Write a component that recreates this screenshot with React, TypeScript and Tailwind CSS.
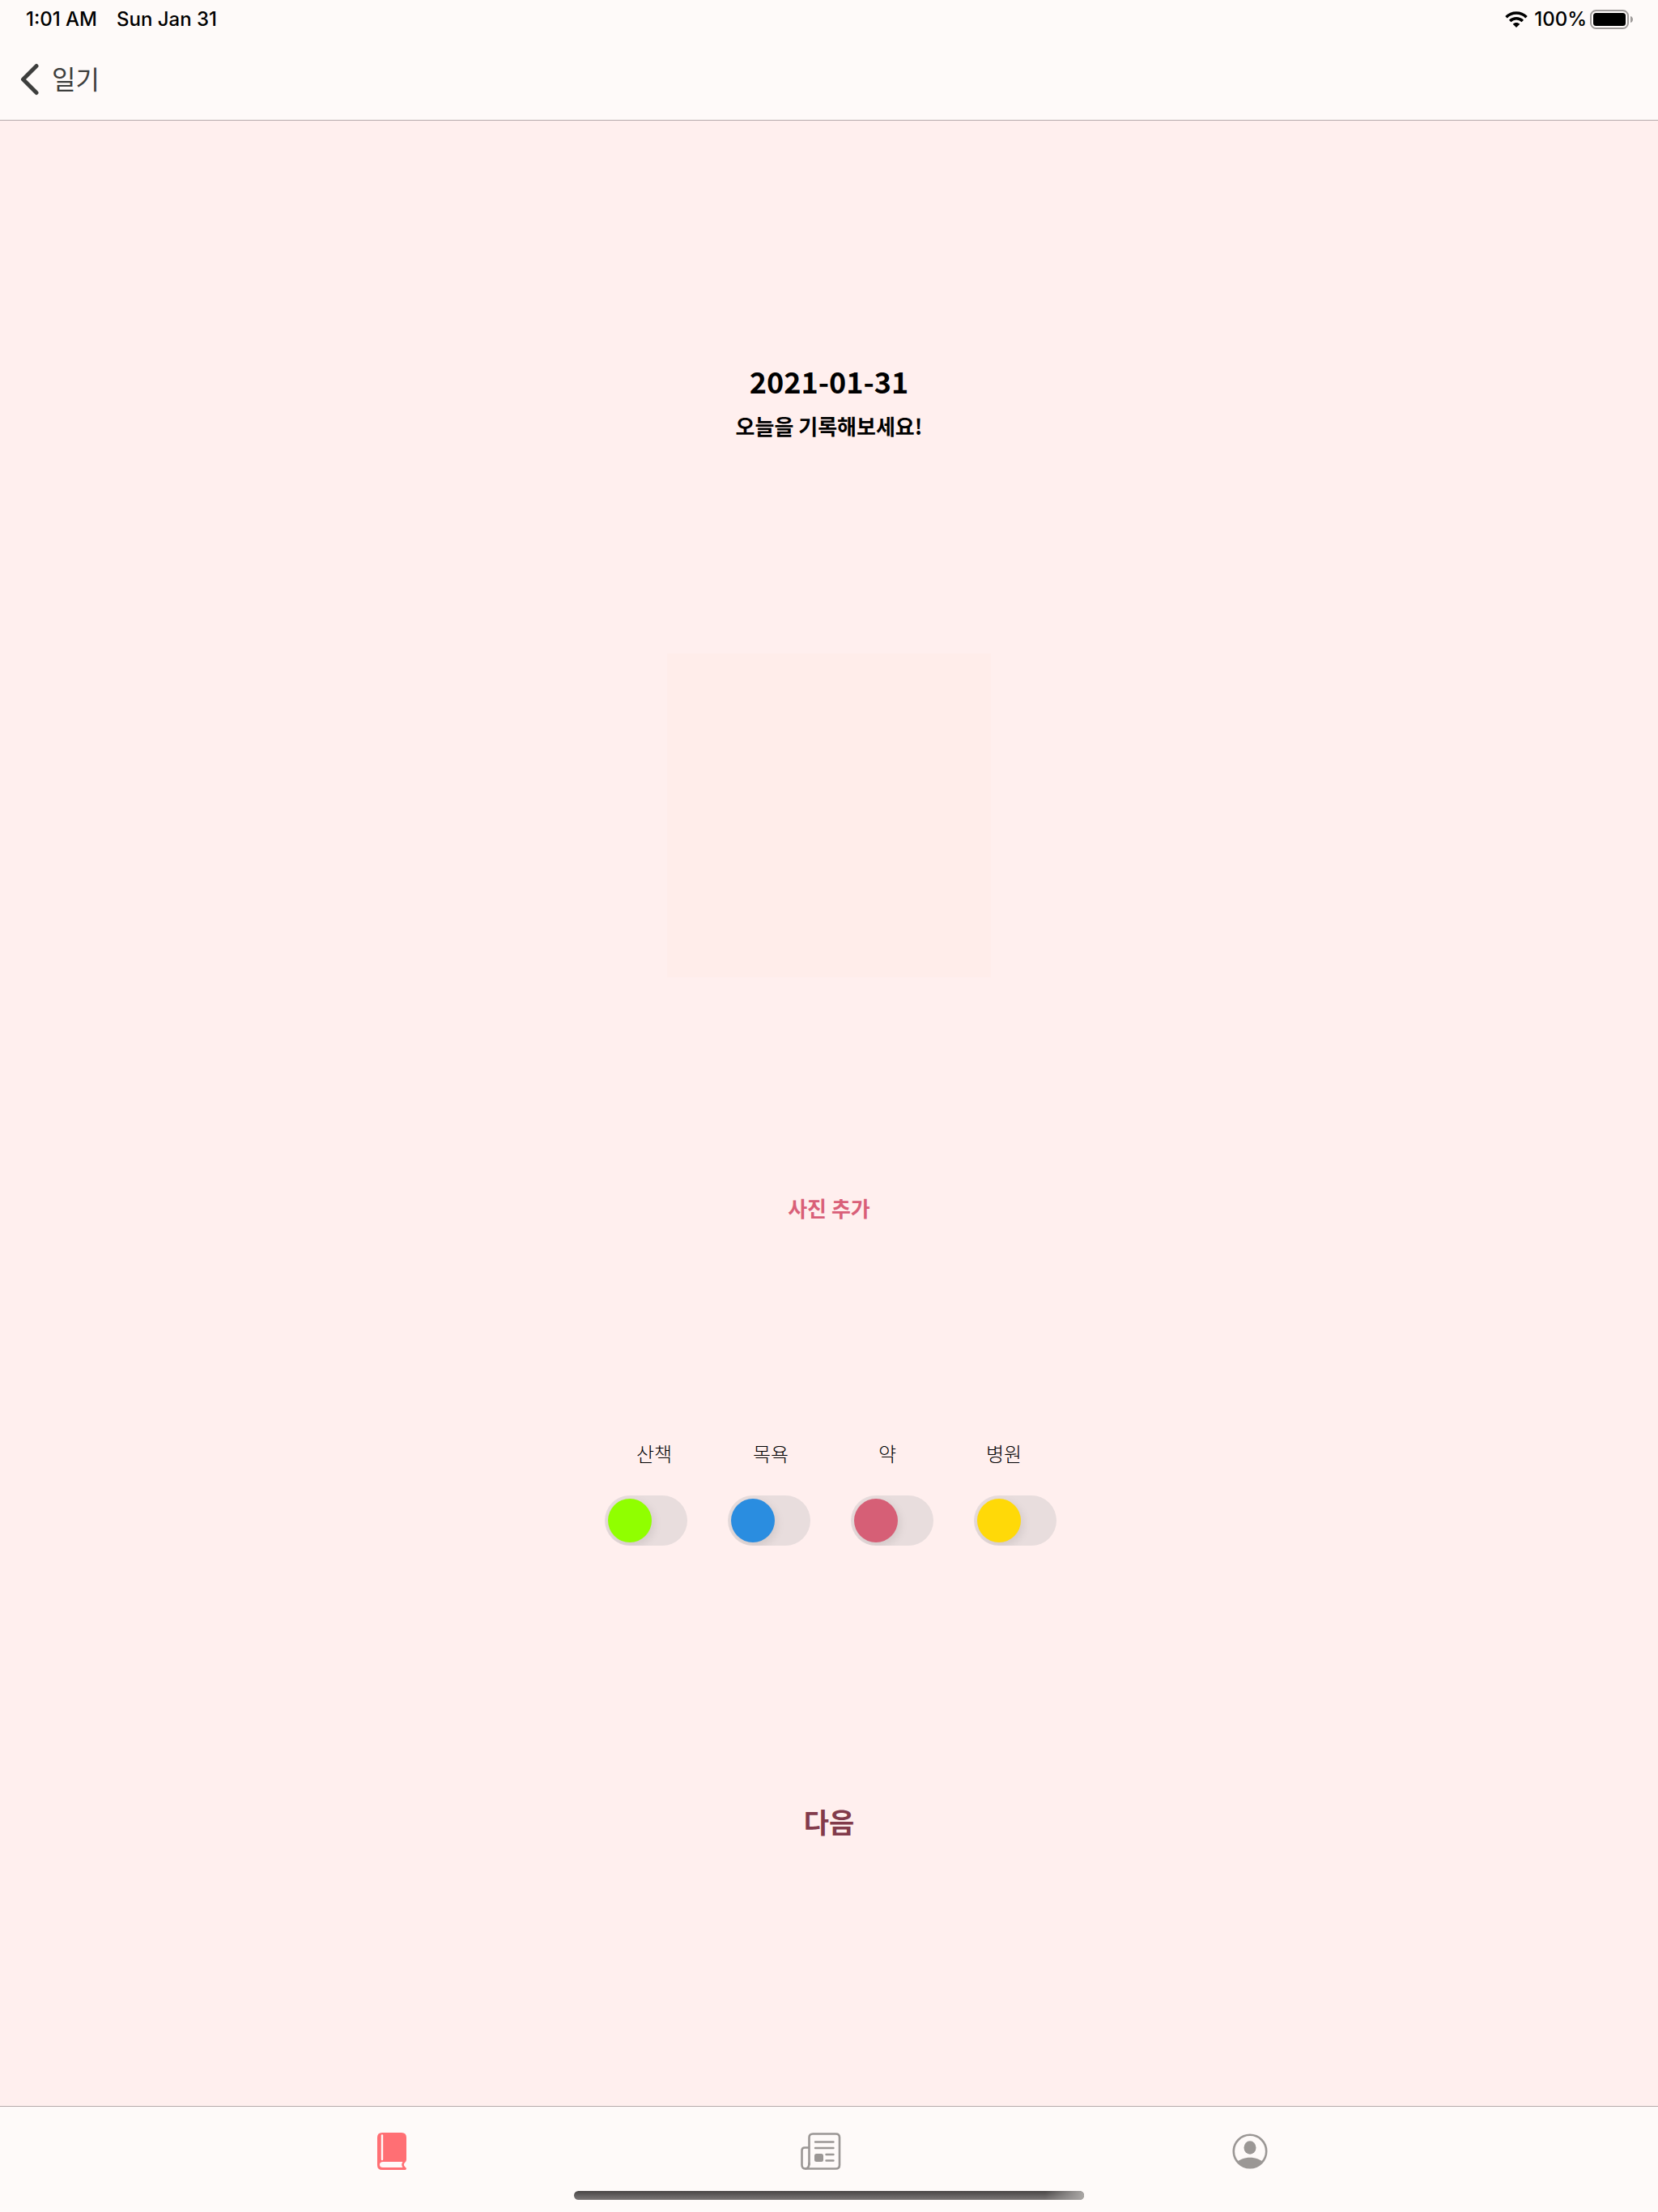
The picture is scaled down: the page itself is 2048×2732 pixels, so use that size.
import React from "react";

const activities = [
  { id: "walk", label: "산책", knob: "before:bg-[#90ff00]" },
  { id: "bath", label: "목욕", knob: "before:bg-[#2a8de0]" },
  { id: "medicine", label: "약", knob: "before:bg-[#d65f76]" },
  { id: "hospital", label: "병원", knob: "before:bg-[#ffd908]" },
];

function WifiIcon() {
  return (
    <svg width="28" height="20" viewBox="0 0 28 20" fill="none" stroke="#000" strokeWidth="3.6" aria-hidden="true">
      <path d="M1.5 7.2C8.4 .3 19.600 .3 26.500 7.200" />
      <path d="M6.200 11.900C10.500 7.600 17.500 7.600 21.800 11.900" />
      <path d="M14 20L9.700 15.700C12.100 13.500 15.900 13.500 18.300 15.700Z" fill="#000" stroke="none" />
    </svg>
  );
}

function BatteryIcon() {
  return (
    <svg width="54" height="24" viewBox="0 0 54 24" aria-hidden="true">
      <rect x="1" y="1" width="46" height="22" rx="6.500" fill="none" stroke="#9f9b9a" strokeWidth="2" />
      <rect x="4" y="4" width="40" height="16" rx="3.500" fill="#000" />
      <path d="M50 8C54 9 54 15 50 16Z" fill="#9f9b9a" />
    </svg>
  );
}

function ChevronIcon() {
  return (
    <svg width="24" height="40" viewBox="0 0 24 40" fill="none" stroke="#3d3e3d" strokeWidth="5" strokeLinecap="round" strokeLinejoin="round" aria-hidden="true">
      <path d="M21 3.500L4.500 20L21 36.500" />
    </svg>
  );
}

function BookIcon() {
  return (
    <svg width="36" height="46" viewBox="0 0 36 46" aria-hidden="true">
      <path
        d="M6 0H30Q36 0 36 6V33C36 35 35 36 34 37C32.500 38.500 32.500 40.500 34 42L36 44C36 45.500 35 46 34 46H6Q0 46 0 40V6Q0 0 6 0Z"
        fill="#ff6f74"
      />
      <path d="M6 3.500V33" stroke="#fefaf9" strokeWidth="2.400" strokeLinecap="round" />
      <path d="M7 36H31.500C29.800 38.500 29.800 40.500 31.500 43H7Q3 43 3 39.500Q3 36 7 36Z" fill="#fefaf9" />
    </svg>
  );
}

function NewsIcon() {
  return (
    <svg width="50" height="46" viewBox="0 0 50 46" fill="none" stroke="#9b9795" strokeWidth="2.600" strokeLinecap="round" aria-hidden="true">
      <path d="M10.500 39V6Q10.500 1.500 15 1.500H43.500Q48 1.500 48 6V40Q48 44.500 43.500 44.500H6Q1.500 44.500 1.500 40V22Q1.500 18.500 5 18.500H10.500" />
      <path d="M10.500 38Q10.500 44 6 44.500" />
      <path d="M18 11.500H40.500M18 19H40.500M31.500 27H40.500M31.500 34.500H40.500" strokeWidth="2.400" />
      <rect x="17" y="26" width="11" height="10" rx="2.500" fill="#9b9795" stroke="none" />
    </svg>
  );
}

function ProfileIcon() {
  return (
    <svg width="44" height="44" viewBox="0 0 44 44" aria-hidden="true">
      <defs>
        <clipPath id="profile-ring">
          <circle cx="22" cy="22" r="21" />
        </clipPath>
      </defs>
      <circle cx="22" cy="22" r="20.200" fill="none" stroke="#9b9795" strokeWidth="2.600" />
      <ellipse cx="22" cy="17.500" rx="7.500" ry="8.200" fill="#9b9795" />
      <path d="M5 36.500C12 27.500 32 27.500 39 36.500V44H5Z" fill="#9b9795" clipPath="url(#profile-ring)" />
    </svg>
  );
}

export default function App() {
  return (
    <div className="flex min-h-screen flex-col bg-[#ffefee] font-['Noto_Sans_CJK_KR',sans-serif] text-black">
      <header className="border-b border-[#b5aaab] bg-[#fefaf9]">
        <div className="flex h-12 items-center justify-between pr-[30px] pl-8 font-['Inter',sans-serif] text-2xl font-medium">
          <div className="flex gap-6">
            <span>1:01 AM</span>
            <span>Sun Jan 31</span>
          </div>
          <div className="flex items-center">
            <WifiIcon />
            <span className="mr-1 ml-2">100%</span>
            <BatteryIcon />
          </div>
        </div>
        <div className="flex h-25 items-center pl-6">
          <button type="button" className="flex items-center gap-4 text-[32px] leading-10 text-[#3d3e3d]">
            <ChevronIcon />
            <span className="pb-1">일기</span>
          </button>
        </div>
      </header>

      <main className="flex flex-1 flex-col items-center pt-[297px]">
        <h1 className="text-4xl leading-12 font-bold">2021-01-31</h1>
        <p className="mt-4 text-[26px] leading-8 font-bold">오늘을 기록해보세요!</p>

        <div className="mt-[265px] size-100 bg-[#ffedea]" />

        <button type="button" className="mt-[265px] text-[26px] leading-10 font-bold text-[#d95f78]">
          사진 추가
        </button>

        <div className="mt-[267px] grid w-[576px] grid-cols-4">
          {activities.map((a) => (
            <label key={a.id} htmlFor={a.id} className="text-center text-2xl leading-8 font-light">
              {a.label}
            </label>
          ))}
        </div>
        <div className="mt-[36px] flex gap-[50px] pl-1">
          {activities.map((a) => (
            <input
              key={a.id}
              id={a.id}
              type="checkbox"
              role="switch"
              className={
                "h-[62px] w-[102px] cursor-pointer appearance-none overflow-hidden rounded-full bg-[#e8dddd] p-1 before:block before:size-[54px] before:rounded-full before:shadow-[2px_4px_12px_rgba(0,0,0,0.1)] before:transition-transform checked:before:translate-x-10 " +
                a.knob
              }
            />
          ))}
        </div>

        <button type="button" className="mt-[317px] text-[34px] leading-12 font-bold text-[#823b4b]">
          다음
        </button>
      </main>

      <footer className="flex h-[131px] flex-col items-center border-t border-[#b5aaab] bg-[#fefaf9]">
        <nav className="mr-5 grid h-26 w-full max-w-[1590px] grid-cols-3 place-items-center pt-1.5">
          <a href="#diary" aria-label="일기">
            <BookIcon />
          </a>
          <a href="#news" aria-label="소식">
            <NewsIcon />
          </a>
          <a href="#profile" aria-label="프로필">
            <ProfileIcon />
          </a>
        </nav>
        <div className="h-[11px] w-[630px] max-w-full overflow-hidden rounded-full bg-linear-to-b from-[#494646] to-[#7b7777]">
          <div className="ml-auto h-full w-12 bg-linear-to-r from-transparent to-[#aaa7a5]" />
        </div>
      </footer>
    </div>
  );
}
